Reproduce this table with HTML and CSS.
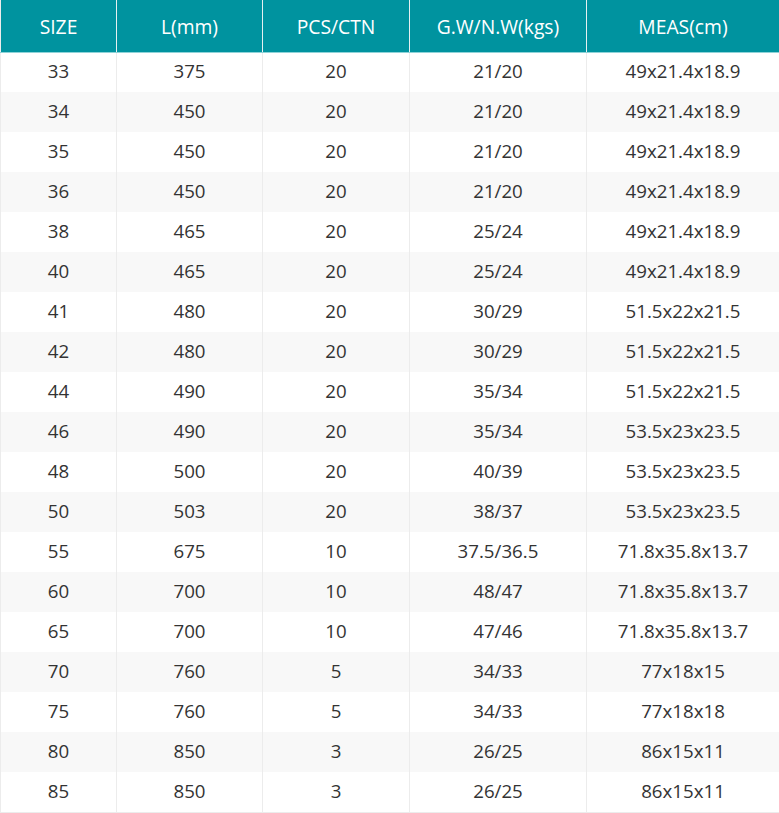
FILE: index.html
```html
<!DOCTYPE html>
<html>
<head>
<meta charset="utf-8">
<link rel="stylesheet" href="styles.css">
</head>
<body>
<table class="spec">
<colgroup>
<col class="c1"><col class="c2"><col class="c3"><col class="c4"><col class="c5">
</colgroup>
<thead>
<tr><th>SIZE</th><th>L(mm)</th><th>PCS/CTN</th><th>G.W/N.W(kgs)</th><th>MEAS(cm)</th></tr>
</thead>
<tbody>
<tr><td>33</td><td>375</td><td>20</td><td>21/20</td><td>49x21.4x18.9</td></tr>
<tr><td>34</td><td>450</td><td>20</td><td>21/20</td><td>49x21.4x18.9</td></tr>
<tr><td>35</td><td>450</td><td>20</td><td>21/20</td><td>49x21.4x18.9</td></tr>
<tr><td>36</td><td>450</td><td>20</td><td>21/20</td><td>49x21.4x18.9</td></tr>
<tr><td>38</td><td>465</td><td>20</td><td>25/24</td><td>49x21.4x18.9</td></tr>
<tr><td>40</td><td>465</td><td>20</td><td>25/24</td><td>49x21.4x18.9</td></tr>
<tr><td>41</td><td>480</td><td>20</td><td>30/29</td><td>51.5x22x21.5</td></tr>
<tr><td>42</td><td>480</td><td>20</td><td>30/29</td><td>51.5x22x21.5</td></tr>
<tr><td>44</td><td>490</td><td>20</td><td>35/34</td><td>51.5x22x21.5</td></tr>
<tr><td>46</td><td>490</td><td>20</td><td>35/34</td><td>53.5x23x23.5</td></tr>
<tr><td>48</td><td>500</td><td>20</td><td>40/39</td><td>53.5x23x23.5</td></tr>
<tr><td>50</td><td>503</td><td>20</td><td>38/37</td><td>53.5x23x23.5</td></tr>
<tr><td>55</td><td>675</td><td>10</td><td>37.5/36.5</td><td>71.8x35.8x13.7</td></tr>
<tr><td>60</td><td>700</td><td>10</td><td>48/47</td><td>71.8x35.8x13.7</td></tr>
<tr><td>65</td><td>700</td><td>10</td><td>47/46</td><td>71.8x35.8x13.7</td></tr>
<tr><td>70</td><td>760</td><td>5</td><td>34/33</td><td>77x18x15</td></tr>
<tr><td>75</td><td>760</td><td>5</td><td>34/33</td><td>77x18x18</td></tr>
<tr><td>80</td><td>850</td><td>3</td><td>26/25</td><td>86x15x11</td></tr>
<tr><td>85</td><td>850</td><td>3</td><td>26/25</td><td>86x15x11</td></tr>
</tbody>
</table>
</body>
</html>
```
FILE: styles.css
```css
html, body {
  margin: 0;
  padding: 0;
  background: #ffffff;
}
.spec {
  width: 779px;
  border-collapse: collapse;
  table-layout: fixed;
  font-family: "Open Sans", "Liberation Sans", sans-serif;
  font-size: 18.7px;
  color: #333333;
  border-bottom: 1px solid #ececec;
  border-left: 1px solid #ececec;
  border-right: 1px solid #ececec;
}
.c1 { width: 116px; }
.c2 { width: 146px; }
.c3 { width: 147px; }
.c4 { width: 177px; }
.c5 { width: 193px; }
.spec th {
  background: #00939f;
  color: #ffffff;
  font-weight: normal;
  font-size: 19.3px;
  height: 52px;
  padding: 1px 0 0;
  border-left: 1px solid #e6f0f1;
  border-right: 1px solid #e6f0f1;
  border-bottom: 1px solid #8fd3d8;
  text-align: center;
  vertical-align: middle;
  box-sizing: border-box;
}
.spec th:first-child { border-left: 0; }
.spec th:last-child { border-right: 0; }
.spec td {
  height: 40px;
  padding: 0 0 3px;
  border-left: 1px solid #ececec;
  border-right: 1px solid #ececec;
  text-align: center;
  vertical-align: middle;
  box-sizing: border-box;
}
.spec tbody tr:nth-child(even) td {
  background: #f8f8f8;
}
```
